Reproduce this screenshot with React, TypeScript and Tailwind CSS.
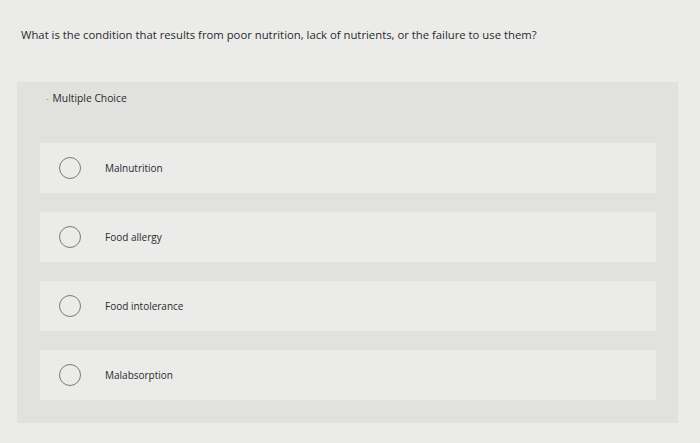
const options = ['Malnutrition', 'Food allergy', 'Food intolerance', 'Malabsorption'];

export default function App() {
  return (
    <div className="h-[443px] w-[700px] overflow-hidden bg-[#ebebea] font-['Open_Sans',sans-serif] text-[#2a2a2a]">
      <div className="px-[21px] pt-[27px] text-[11.3px] leading-[16px]">
        What is the condition that results from poor nutrition, lack of nutrients, or the failure to use them?
      </div>
      <div className="mx-[17px] mt-[39px] w-[661px] bg-[#e1e1e0] pb-[23px]">
        <div className="flex items-center gap-[4px] pl-[29px] pt-[9px] text-[10.3px] leading-[14px]">
          <span className="text-[8px] text-[#808080]">-</span>
          <span>Multiple Choice</span>
        </div>
        <div className="ml-[23px] mr-[22px] mt-[38px] flex flex-col gap-[19px]">
          {options.map((o) => (
            <div key={o} className="flex h-[50px] items-center bg-[#ebebea] pl-[19px]">
              <span className="h-[22px] w-[22px] rounded-full border-[1.5px] border-[#7a7a7a]" />
              <span className="ml-[24px] text-[10px]">{o}</span>
            </div>
          ))}
        </div>
      </div>
    </div>
  );
}
